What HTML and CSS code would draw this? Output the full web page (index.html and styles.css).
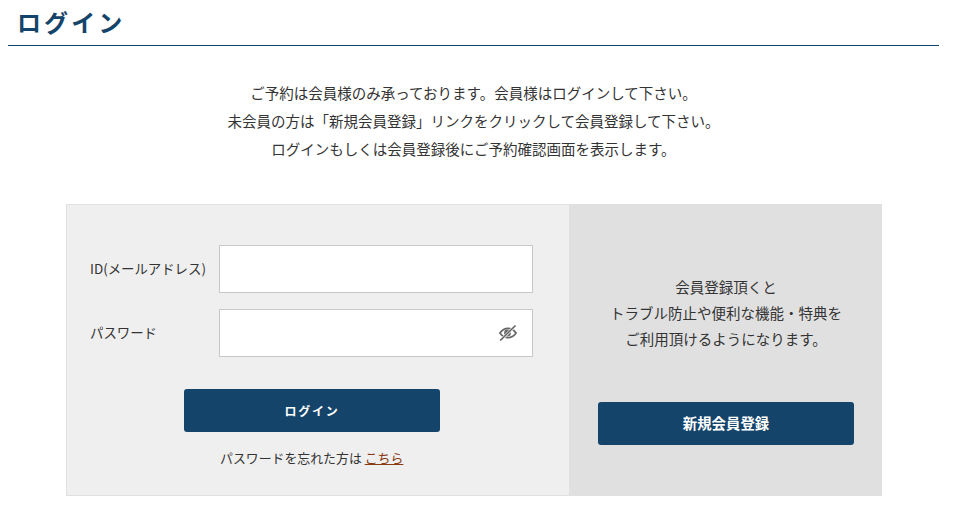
FILE: index.html
```html
<!DOCTYPE html>
<html lang="ja">
<head>
<meta charset="utf-8">
<title>ログイン</title>
<link rel="stylesheet" href="styles.css">
</head>
<body>
<h1 class="title">ログイン</h1>
<div class="intro">
  <p>ご予約は会員様のみ承っております。会員様はログインして下さい。</p>
  <p>未会員の方は「新規会員登録」リンクをクリックして会員登録して下さい。</p>
  <p>ログインもしくは会員登録後にご予約確認画面を表示します。</p>
</div>
<div class="panel">
  <form class="login">
    <div class="row">
      <label class="label">ID(メールアドレス)</label>
      <div class="field"></div>
    </div>
    <div class="row">
      <label class="label">パスワード</label>
      <div class="field">
        <svg class="eye" width="18" height="16" viewBox="0 0 18 16" fill="none" stroke="#666" stroke-width="1.7">
          <path d="M.9 8C3 5.100 6 3.300 9 3.300S15 5.100 17.100 8C15 10.900 12 12.700 9 12.700S3 10.900 .9 8Z"/>
          <circle cx="8.500" cy="8" r="3.400" fill="#666" stroke="none"/>
          <path d="M1.500 15.500 16.500.5" stroke="#fff" stroke-width="3"/>
          <path d="M1.200 15.500 16.500.5" stroke-width="1.600"/>
        </svg>
      </div>
    </div>
    <button type="button" class="btn btn-login">ログイン</button>
    <p class="forgot">パスワードを忘れた方は <a href="#">こちら</a></p>
  </form>
  <div class="register">
    <p class="reg-text">会員登録頂くと<br>トラブル防止や便利な機能・特典を<br>ご利用頂けるようになります。</p>
    <button type="button" class="btn btn-reg">新規会員登録</button>
  </div>
</div>
</body>
</html>
```
FILE: styles.css
```css
* { box-sizing: border-box; }
html, body { margin: 0; padding: 0; }
body {
  background: #fff;
  color: #333;
  font-family: "Noto Sans CJK JP", "Liberation Sans", sans-serif;
  font-size: 14px;
  padding: 0 20px 0 8px;
  width: 959px;
}
.title {
  margin: 0;
  height: 46px;
  padding: 6px 0 0 9px;
  border-bottom: 1px solid #14446a;
  color: #14446a;
  font-size: 24px;
  line-height: 32px;
  font-weight: 700;
  letter-spacing: 3.100px;
}
.intro {
  margin-top: 33px;
  text-align: center;
  font-size: 14.500px;
  line-height: 28px;
  color: #333;
}
.intro p { margin: 0; }
.panel {
  display: flex;
  width: 816px;
  height: 292px;
  margin: 41px 0 0 58px;
  border: 1px solid #e0e0e0;
  background: #efefef;
}
.login {
  width: 502px;
  padding: 40px 36px 0 23px;
  display: flex;
  flex-direction: column;
}
.row {
  display: flex;
  align-items: center;
  margin-bottom: 16px;
}
.label {
  width: 129px;
  flex: none;
  font-size: 13.400px;
  line-height: 20px;
  padding-bottom: 3px;
  height: 23px;
}
.field {
  flex: 1;
  height: 48px;
  background: #fff;
  border: 1px solid #c8c8c8;
  display: flex;
  align-items: center;
  justify-content: flex-end;
  padding-right: 15px;
}
.eye { display: block; }
.btn {
  display: block;
  width: 256px;
  height: 43px;
  border: 0;
  border-radius: 3px;
  background: #14446a;
  color: #fff;
  font-family: "Noto Sans CJK JP", sans-serif;
  font-weight: 700;
  padding: 0;
}
.btn-login {
  margin: 16px 0 0 94px;
  font-size: 12px;
  letter-spacing: 1.800px;
}
.forgot {
  margin: 14px 0 0 24px;
  padding-left: 106px;
  font-size: 12.900px;
  line-height: 24px;
}
.forgot a { color: #8a3a14; text-decoration: underline; }
.register {
  flex: 1;
  background: #e0e0e0;
  padding: 69px 27px 0 29px;
  display: flex;
  flex-direction: column;
  align-items: center;
}
.reg-text {
  margin: 0;
  text-align: center;
  font-size: 14.500px;
  line-height: 26px;
}
.btn-reg {
  margin-top: 50px;
  padding-bottom: 3px;
  font-size: 14.400px;
}
```
